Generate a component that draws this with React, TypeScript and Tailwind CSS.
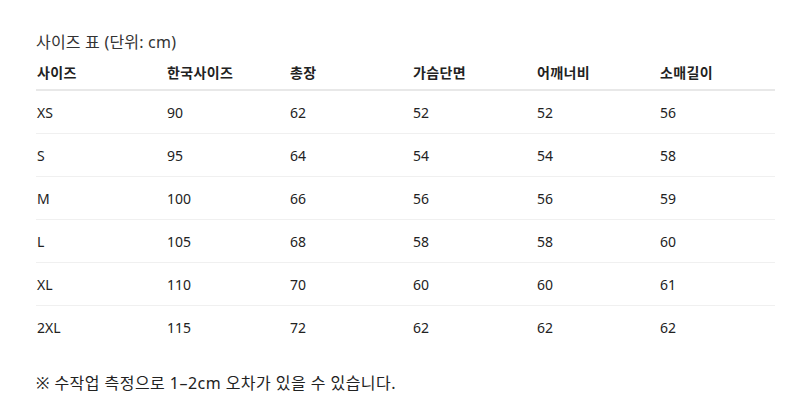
import React from "react";

const headers = ["사이즈", "한국사이즈", "총장", "가슴단면", "어깨너비", "소매길이"];
const rows = [
  ["XS", "90", "62", "52", "52", "56"],
  ["S", "95", "64", "54", "54", "58"],
  ["M", "100", "66", "56", "56", "59"],
  ["L", "105", "68", "58", "58", "60"],
  ["XL", "110", "70", "60", "60", "61"],
  ["2XL", "115", "72", "62", "62", "62"],
];

const cols = "grid grid-cols-[130px_123px_123px_124px_123px_116px]";

export default function App() {
  return (
    <div
      className="w-[800px] h-[400px] bg-white text-[#222] pl-[36px] pt-[30px]"
      style={{ fontFamily: '"Noto Sans", "Noto Sans CJK KR", sans-serif' }}
    >
      <div className="text-[16px] leading-[24px] tracking-[0.2px] text-[#333]">사이즈 표 (단위: cm)</div>
      <div className="w-[739px] mt-[2px]">
        <div className={`${cols} h-[35px] items-center border-b-2 border-[#e8e8e8] text-[14px] font-bold tracking-[0.4px]`}>
          {headers.map((h) => (
            <div key={h} className="pl-[1px]">{h}</div>
          ))}
        </div>
        {rows.map((r, i) => (
          <div
            key={r[0]}
            className={`${cols} h-[43px] items-center text-[14px] ${i < rows.length - 1 ? "border-b border-[#f0f0f0]" : ""}`}
          >
            {r.map((c, j) => (
              <div key={j} className="pl-[1px]">{c}</div>
            ))}
          </div>
        ))}
      </div>
      <div className="mt-[22px] text-[16px] leading-[24px] tracking-[0.45px] text-[#222]">
        ※ 수작업 측정으로 1–2cm 오차가 있을 수 있습니다.
      </div>
    </div>
  );
}
